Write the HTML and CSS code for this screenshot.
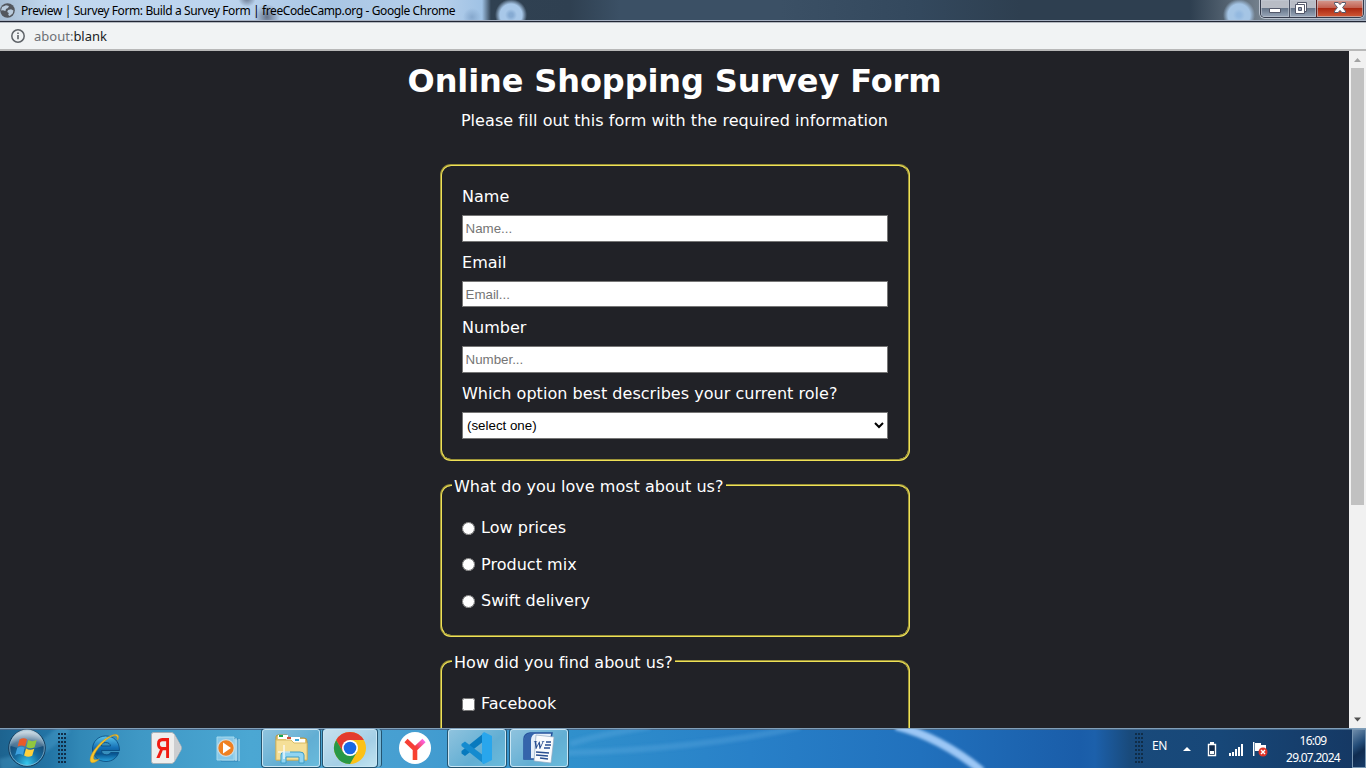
FILE: index.html
```html
<!DOCTYPE html>
<html lang="en">
<head>
<meta charset="utf-8">
<title>Preview | Survey Form: Build a Survey Form</title>
<link rel="stylesheet" href="styles.css">
</head>
<body>
<div class="desktop">
  <header class="titlebar">
    <svg class="favicon" width="15" height="15" viewBox="0 0 15 15"><circle cx="7.5" cy="7.5" r="7.3" fill="#53575d"/><path d="M2 4L6 2.2 9 3 8 5 6 6 5.4 8 3 7.2 1 7.5ZM8 7l3-.8 2.5 1.3-.8 3-3 2.5-1.5-1 .6-2-1.6-1Z" fill="#b9cbdc"/></svg>
    <span class="window-title">Preview | Survey Form: Build a Survey Form | freeCodeCamp.org - Google Chrome</span>
    <div class="window-buttons">
      <span class="wbtn wbtn-min"><svg width="12" height="6" viewBox="0 0 12 6"><path d="M.5 1.500h11v4H.5z" fill="#fff" stroke="#53586a"/></svg></span>
      <span class="wbtn wbtn-max"><svg width="12" height="12" viewBox="0 0 12 12"><path d="M2.500.5h9v9h-9z" fill="#fff" stroke="#53586a"/><path d="M.5 2.500h9v9h-9z" fill="#fff" stroke="#53586a"/><path d="M3.500 5.500h3v3h-3z" fill="#8f9bb0" stroke="#53586a"/></svg></span>
      <span class="wbtn wbtn-close"><svg width="12" height="11" viewBox="0 0 12 11"><path d="M.5.5h3.600L6 2.600 7.900.5h3.600v1.400L8.600 5.500l2.900 3.600v1.400H7.900L6 8.400 4.100 10.500H.5V9.100l2.900-3.600L.5 1.900Z" fill="#fff" stroke="#53586a"/></svg></span>
    </div>
  </header>
  <div class="addressbar">
    <svg width="14" height="14" viewBox="0 0 14 14"><circle cx="7" cy="7" r="6.200" fill="none" stroke="#5f6368" stroke-width="1.500"/><path d="M6.200 6h1.600v4.300H6.200zM6.200 3.500h1.600V5H6.200z" fill="#5f6368"/></svg>
    <span class="url"><span class="scheme">about:</span>blank</span>
  </div>
  <div class="viewport">
    <main class="page">
      <h1 class="title">Online Shopping Survey Form</h1>
      <p class="description">Please fill out this form with the required information</p>
      <form class="survey">
        <fieldset class="group group-fields">
          <label class="field"><span class="label-text">Name</span><input class="control" type="text" placeholder="Name..."></label>
          <label class="field"><span class="label-text">Email</span><input class="control" type="email" placeholder="Email..."></label>
          <label class="field"><span class="label-text">Number</span><input class="control" type="text" placeholder="Number..."></label>
          <label class="field"><span class="label-text">Which option best describes your current role?</span><select class="control select"><option>(select one)</option></select></label>
        </fieldset>
        <fieldset class="group group-choices">
          <legend class="legend">What do you love most about us?</legend>
          <label class="choice"><input class="tick" type="radio" name="love">Low prices</label>
          <label class="choice"><input class="tick" type="radio" name="love">Product mix</label>
          <label class="choice"><input class="tick" type="radio" name="love">Swift delivery</label>
        </fieldset>
        <fieldset class="group group-choices">
          <legend class="legend">How did you find about us?</legend>
          <label class="choice"><input class="tick" type="checkbox">Facebook</label>
        </fieldset>
      </form>
    </main>
    <div class="scrollbar">
      <svg width="17" height="17" viewBox="0 0 17 17"><path d="M5 11l3.500-4 3.500 4z" fill="#a3a3a3"/></svg>
      <div class="thumb"></div>
      <svg class="scroll-down" width="17" height="17" viewBox="0 0 17 17"><path d="M5 6.500h7L8.500 10.500z" fill="#505050"/></svg>
    </div>
  </div>
  <footer class="taskbar">
    <svg class="streaks" width="1366" height="40" viewBox="0 0 1366 40"><defs><filter id="soft" x="-10%" y="-50%" width="120%" height="200%"><feGaussianBlur stdDeviation="1.800"/></filter></defs><g filter="url(#soft)" fill="none"><path d="M896-3Q940 8 982 42" stroke="#9cc7f5" stroke-width="8"/><path d="M565 24Q700 20 800-2M570 15Q600 5 650-2" stroke="#63b0e4" stroke-width="6" opacity=".3"/><path d="M0 36Q35 30 66-2" stroke="#5eafd9" stroke-width="12" opacity=".3"/></g></svg>
    <div class="start">
      <svg width="40" height="40" viewBox="0 0 40 40"><defs><radialGradient id="orb" cx=".5" cy=".92" r=".85"><stop offset="0" stop-color="#35c8ed"/><stop offset=".4" stop-color="#176da1"/><stop offset=".75" stop-color="#174c76"/><stop offset="1" stop-color="#7b9db5"/></radialGradient><linearGradient id="shine" x2="0" y2="1"><stop stop-color="#fff" stop-opacity=".65"/><stop offset="1" stop-color="#fff" stop-opacity=".12"/></linearGradient></defs><circle cx="20" cy="20" r="18.300" fill="url(#orb)" stroke="#173c5a"/><path d="M3.500 18a16.500 16.500 0 0 1 33 0Q20 24 3.500 18Z" fill="url(#shine)"/><circle cx="20" cy="20" r="17.300" fill="none" stroke="#a3cde2" opacity=".6"/><path d="M12.500 11.500q4-2.500 7.500-.3l-1.900 7.200q-3.500-2-7.500 0Z" fill="#e85b29"/><path d="M21.200 12q4 2.300 8.500 0l-2.100 7.300q-4 2.200-8.200-.2Z" fill="#91c73f"/><path d="M10.200 20q4-2.300 7.500-.2l-1.800 7.300q-3.800-2.200-7.800.3Z" fill="#3da1df"/><path d="M19 20.500q4 2.500 8.300.2l-2.100 7q-4.100 2.400-8.100-.2Z" fill="#ffd13b"/></svg>
    </div>
    <div class="grip"></div>
    <div class="apps">
      <span class="app app-ie"><svg width="34" height="34" viewBox="0 0 34 34"><defs><linearGradient id="ie" x2="0" y2="1"><stop stop-color="#5cc6ec"/><stop offset=".45" stop-color="#1672b8"/><stop offset=".7" stop-color="#07548f"/><stop offset="1" stop-color="#29a5df"/></linearGradient></defs><path d="M17.500 5C25.500 5 31.500 10 31.500 19.500H13.500c0 2.700 2 4.300 5 4.300 2 0 3.500-.8 4.200-2.300h8C29 27 24 30.500 18 30.500 10 30.500 4.500 25 4.500 18S10 5 17.500 5Zm0 6.500c-2.500 0-4 1.300-4.200 3.500h9.200c-.2-2.200-2-3.500-5-3.500Z" fill="url(#ie)" stroke="#07487b" stroke-width=".8"/><path d="M29.500 9c3-5-1-7-6-4.500C12 9 0 25 2.500 30.500c1 2.300 5 1.300 9-2.500-4 1.500-6 1-6-1C6 20 18 7 25.500 4.700c3-.5 4.500 1 4 4.300Z" fill="#f7c52b" stroke="#d59613" stroke-width=".5"/></svg></span>
      <span class="app app-ya"><svg width="34" height="34" viewBox="0 0 34 34"><path d="M4.500 1.500h18q2 0 3 2L32 15q1 2 0 4l-6.500 11.500q-1 2-3 2h-18q-2 0-2-2v-27q0-2 2-2Z" fill="#eeeeed" stroke="#a5b0b7"/><path d="M25 3l6.500 12q1 2 0 4L25 31Z" fill="#cdced0"/><text class="ya-letter" transform="translate(7 27) scale(.74 1.060)">Я</text></svg></span>
      <span class="app app-media"><svg width="32" height="34" viewBox="0 0 32 34"><path d="M8 6l17 2v22H8z" fill="#91c9e6" stroke="#2e82b5"/><path d="M4 6h17v23H4z" fill="#86c8e9" stroke="#a5daee"/><path d="M23 7v23M26 8v22" stroke="#c6e8f5"/><circle cx="13" cy="17" r="8.300" fill="#ef8021" stroke="#cddbe0" stroke-width="1.300"/><path d="M10 11.500l8 5.500-8 5.500z" fill="#fff"/></svg></span>
      <span class="app open app-files"><svg width="34" height="34" viewBox="0 0 34 34"><path d="M2 6q0-2 2-2h9l2 3h15q3 0 3 3v19H2Z" fill="#e6c770" stroke="#b49447"/><path d="M4 4h10v4H4z" fill="#fff"/><path d="M5 4h4v2H5z" fill="#16a74e"/><path d="M12 6h14v4H12z" fill="#fff"/><path d="M13 6h4v2h-4z" fill="#d15138"/><path d="M19 8h12v4H19z" fill="#fff"/><path d="M21 8h4v2h-4z" fill="#3da7d9"/><path d="M2 9h15l3 3h13v17H2Z" fill="#f5df97" stroke="#d8bc66"/><path d="M7 32v-8q0-3 3-3h16q4 0 4 3v8h-5v-6H12v6Z" fill="#91d5f2" stroke="#3d9dc7"/><path d="M10 14v14M4 21h12" stroke="#fff" stroke-width="1.200"/></svg></span>
      <span class="app open active app-chrome"><svg width="34" height="34" viewBox="0 0 34 34"><circle cx="17" cy="17" r="16" fill="#fbc116"/><path d="M3.140 9L10 21 17 17V9H30.860A16 16 0 0 0 3.140 9Z" fill="#e33b2e"/><path d="M3.140 9A16 16 0 0 0 17 33L23.930 21 10.070 21Z" fill="#279847"/><circle cx="17" cy="17" r="8" fill="#fff"/><circle cx="17" cy="17" r="6.300" fill="#1a68e5"/></svg></span>
      <span class="app app-yb"><svg width="34" height="34" viewBox="0 0 34 34"><defs><linearGradient id="yb" x1="0" y1="1" x2="1" y2="0"><stop stop-color="#fc4a20"/><stop offset=".6" stop-color="#f53d39"/><stop offset="1" stop-color="#fb65ea"/></linearGradient></defs><circle cx="17" cy="17" r="16" fill="#fff"/><path d="M8 9.500l9 8.500 9-8.500M17 17v12" fill="none" stroke="url(#yb)" stroke-width="4.600"/></svg></span>
      <span class="app open app-code"><svg width="34" height="34" viewBox="0 0 34 34"><path d="M24 2v8L5 25 1.500 22.500V20Z" fill="#087abe"/><path d="M1.500 13L5 10.500 24 25v8L1.500 15Z" fill="#158bcf"/><path d="M24 1l8 4v24l-8 4-2-1V3Z" fill="#29a6ec"/></svg></span>
      <span class="app open app-word"><svg width="34" height="34" viewBox="0 0 34 34"><path d="M8 2h22L25 28H2V8q0-5 6-6Z" fill="#e7f0fa" stroke="#26539d" stroke-width="1.500"/><path d="M2 28V9q0-6 7-7h5q-5 2-5 7v19Z" fill="#3565ab"/><path d="M14 4l18 2-3 26-17-2Z" fill="#f9fbfd" stroke="#91a9c3" stroke-width=".7"/><path d="M24 11h5M23 14h6M22 17h6M14 21l13 1M14 24l12 1M18 27l8 1" stroke="#294f91" stroke-width="1.600"/><text x="11" y="18" class="word-letter">W</text></svg></span>
    </div>
    <div class="tray">
      <div class="grip tray-grip"></div>
      <span class="lang">EN</span>
      <svg class="tray-up" width="8" height="4" viewBox="0 0 8 4"><path d="M0 4L4 0l4 4z" fill="#fff"/></svg>
      <svg class="tray-battery" width="10" height="15" viewBox="0 0 10 15"><path d="M3 0h4v2H3z" fill="#fff"/><path d="M1.500 2.500h7v11h-7z" fill="#122b4b" stroke="#fff" stroke-width="1.400"/><path d="M3 9h4v3H3z" fill="#fff"/></svg>
      <svg class="tray-signal" width="15" height="12" viewBox="0 0 15 12"><path d="M0 9h2v3H0zM3 8h2v4H3zM6 5h2v7H6zM9 3h2v9H9zM12 0h2v12h-2z" fill="#fff"/></svg>
      <svg class="tray-flag" width="15" height="15" viewBox="0 0 15 15"><path d="M.7 0v14" stroke="#fff" stroke-width="1.400"/><path d="M2 1h6v2h5v6H2z" fill="#fff"/><circle cx="10" cy="10" r="4.500" fill="#df3428"/><path d="M8 8l4 4M12 8l-4 4" stroke="#fff" stroke-width="1.400"/></svg>
      <div class="clock"><span>16:09</span><span>29.07.2024</span></div>
      <div class="show-desktop"></div>
    </div>
  </footer>
</div>
</body>
</html>
```
FILE: styles.css
```css
* { box-sizing: border-box; }
body { margin: 0; overflow: hidden; }
svg { display: block; flex: none; }
.desktop { width: 1366px; height: 768px; display: grid; grid-template-rows: 22px 29px 677px 40px; overflow: hidden; font-family: "Noto Sans", sans-serif; }

.titlebar { display: flex; align-items: flex-start; border-bottom: 1px solid #222735; box-shadow: inset 0 -1px #a5afc0;
  background:
    radial-gradient(circle at 511px 15px, #86abd3 0 2px, #a8c8e9 6px 11px, transparent 16px),
    radial-gradient(circle at 472px 17px, #86a8cd 0, transparent 9px),
    radial-gradient(circle at 267px 17px, #65738a 0, transparent 13px),
    radial-gradient(circle at 247px -2px, #65738a 0, transparent 9px),
    radial-gradient(circle at 1239px 15px, #94b9e0 0 2px, #a5c5e5 6px 11px, transparent 16px),
    linear-gradient(90deg, #a6bdd3 0, #c2d8ef 50px, #bcd4ee 230px, #a9c6e4 330px, #b7d0eb 440px, #9fc2e5 482px, #304152 491px, #2f4051 570px, #3b5065 620px, #3b5065 780px, #33485d 920px, #2e3f50 1020px, #2e3f50 1190px, #74818d 1260px, #8292a7 1366px); }
.favicon { margin: 3px 0 0; }
.window-title { margin-left: 6px; font-size: 12px; line-height: 22px; color: #000; white-space: nowrap; letter-spacing: -0.388px; }
.window-buttons { display: flex; margin-left: auto; margin-right: 2px; height: 18px; border: 1px solid #343b4c; border-top: 0; border-radius: 0 0 5px 5px; overflow: hidden; box-shadow: 0 0 0 1px #b9c2ce; }
.wbtn { display: flex; align-items: center; justify-content: center; height: 17px; box-shadow: inset 0 0 0 1px #c3c9d399; }
.wbtn-min { width: 28px; padding-top: 3px; background: linear-gradient(#b8bcc5 0 45%, #67768a 50%, #99a7b9); }
.wbtn-max { width: 27px; padding: 0 5px 2px 0; border-left: 1px solid #4b5264; background: linear-gradient(#b8bcc5 0 45%, #67768a 50%, #99a7b9); }
.wbtn-close { width: 47px; padding-bottom: 2px; border-left: 1px solid #582323; background: linear-gradient(#d69b91, #c36151 45%, #ac2812 50%, #d15a37); }

.addressbar { display: flex; align-items: center; gap: 9px; padding-left: 11px; background: #f1f3f4; border-top: 1px solid #b5b9c0; border-bottom: 2px solid #b8b8b8; }
.url { font-size: 13px; line-height: 20px; color: #202124; }
.scheme { color: #6d7074; }

.viewport { display: flex; min-height: 0; overflow: hidden; background: #212227; }
.page { width: 1349px; overflow: hidden; color: #fff; font: 16px/20px "DejaVu Sans", Verdana, sans-serif; letter-spacing: .03px; }
.title { margin: 9px 0 0; text-align: center; font-size: 32px; line-height: 42px; font-weight: 700; white-space: nowrap; letter-spacing: -.11px; }
.description { margin: 8px 0 0; text-align: center; line-height: 22px; letter-spacing: .06px; }
.survey { width: 470px; margin: 32px 0 0 440px; display: flex; flex-direction: column; }
.group { margin: 0; border: 2px groove #efe157; border-radius: 11px; min-width: 0; }
.group-fields { height: 297px; padding: 10px 20px 8px; }
.field { display: block; height: 65.6px; }
.label-text { display: block; height: 39.300px; line-height: 42px; white-space: nowrap; }
.control { display: block; width: 426px; height: 26.500px; margin: 0; padding: 1px 2.500px; border: 1px solid #767676; border-radius: 0; background: #fff; color: #000; font: 13.333px "Liberation Sans", Arial, sans-serif; letter-spacing: 0; }
.control::placeholder { color: #757575; }
.select { padding: 0; }
.group-choices { height: 161px; margin-top: 15px; padding: 16px 10px 0; }
.legend { height: 18px; padding: 0 2px; line-height: 22px; white-space: nowrap; }
.choice { display: flex; align-items: center; height: 36.500px; padding-left: 10px; }
.tick { width: 13px; height: 13px; margin: 0 6px 0 0; }

.scrollbar { width: 17px; display: flex; flex-direction: column; background: #f1f1f1; }
.thumb { height: 437px; margin: 0 2px; background: #c1c1c1; }
.scroll-down { margin-top: auto; }

.taskbar { position: relative; display: flex; overflow: hidden; border-top: 1px solid #809fb9; box-shadow: inset 0 1px #45688a;
  background: linear-gradient(90deg, #1d638f 0, #2375a6 50px, #3188b6 80px, #3f98c5 140px, #4ba7d3 250px, #479fd1 400px, #3090cc 570px, #2880c8 750px, #2171bd 920px, #1a5da9 1080px, #1c60ab 1095px, #194a7b 1130px, #174778 1220px, #153762 1366px); }
.streaks { position: absolute; left: 0; top: 0; }
.start, .grip, .apps, .tray { position: relative; }
.start { width: 57px; padding-left: 7px; margin-top: -1px; }
.grip { width: 9px; height: 31px; margin-top: 4px; background: conic-gradient(from 90deg at 1px 2px, transparent 270deg, #102d48 0) 0 0 / 3px 4px; }
.apps { display: flex; margin-left: 22px; }
.app { display: flex; align-items: center; justify-content: center; width: 58px; height: 38px; margin-right: 4px; }
.app-ie { width: 34px; margin-right: 27px; }
.app-ya { width: 34px; margin-right: 30px; }
.app-media { width: 32px; margin-right: 17px; }
.open { border: 1px solid #c9e6f4; border-radius: 3px; box-shadow: 0 0 0 1px #245470; background: linear-gradient(140deg, #8fc3de, #62aed3 60%, #69bbdc); }
.app-files { margin-right: 3px; }
.active { width: 54px; margin-right: 8px; background: linear-gradient(145deg, #c6e0ee, #a4cfe6 60%, #c0e3f0); box-shadow: 0 0 0 1px #245470, 4px 0 0 0 #79b8d7, 5px 0 0 0 #245470; }
.app-yb { width: 60px; margin-right: 3px; }
.ya-letter { font: 700 27px "Liberation Sans", sans-serif; fill: #f11b12; }
.word-letter { font: italic 700 12px "Liberation Serif", serif; fill: #294f91; }
.tray { display: flex; margin-left: auto; align-items: flex-start; height: 39px; color: #fff; }
.tray-grip { margin-top: 4px; }
.lang { width: 16px; margin: 8px 0 0 9px; font-size: 12px; line-height: 18px; letter-spacing: -.5px; }
.tray-up { margin: 18px 0 0 15px; }
.tray-battery { margin: 13px 0 0 16px; }
.tray-signal { margin: 15px 0 0 12px; }
.tray-flag { margin: 13px 0 0 9px; }
.clock { width: 62px; display: flex; flex-direction: column; align-items: center; margin: 3px 0 0 14px; font-size: 12px; line-height: 17px; letter-spacing: -.75px; }
.show-desktop { width: 14px; height: 39px; margin-left: 8px; border: 1px solid #7896b2; background: linear-gradient(145deg, #6e8caa, #234c78 40%, #102c50 60%, #173b68); }
```
